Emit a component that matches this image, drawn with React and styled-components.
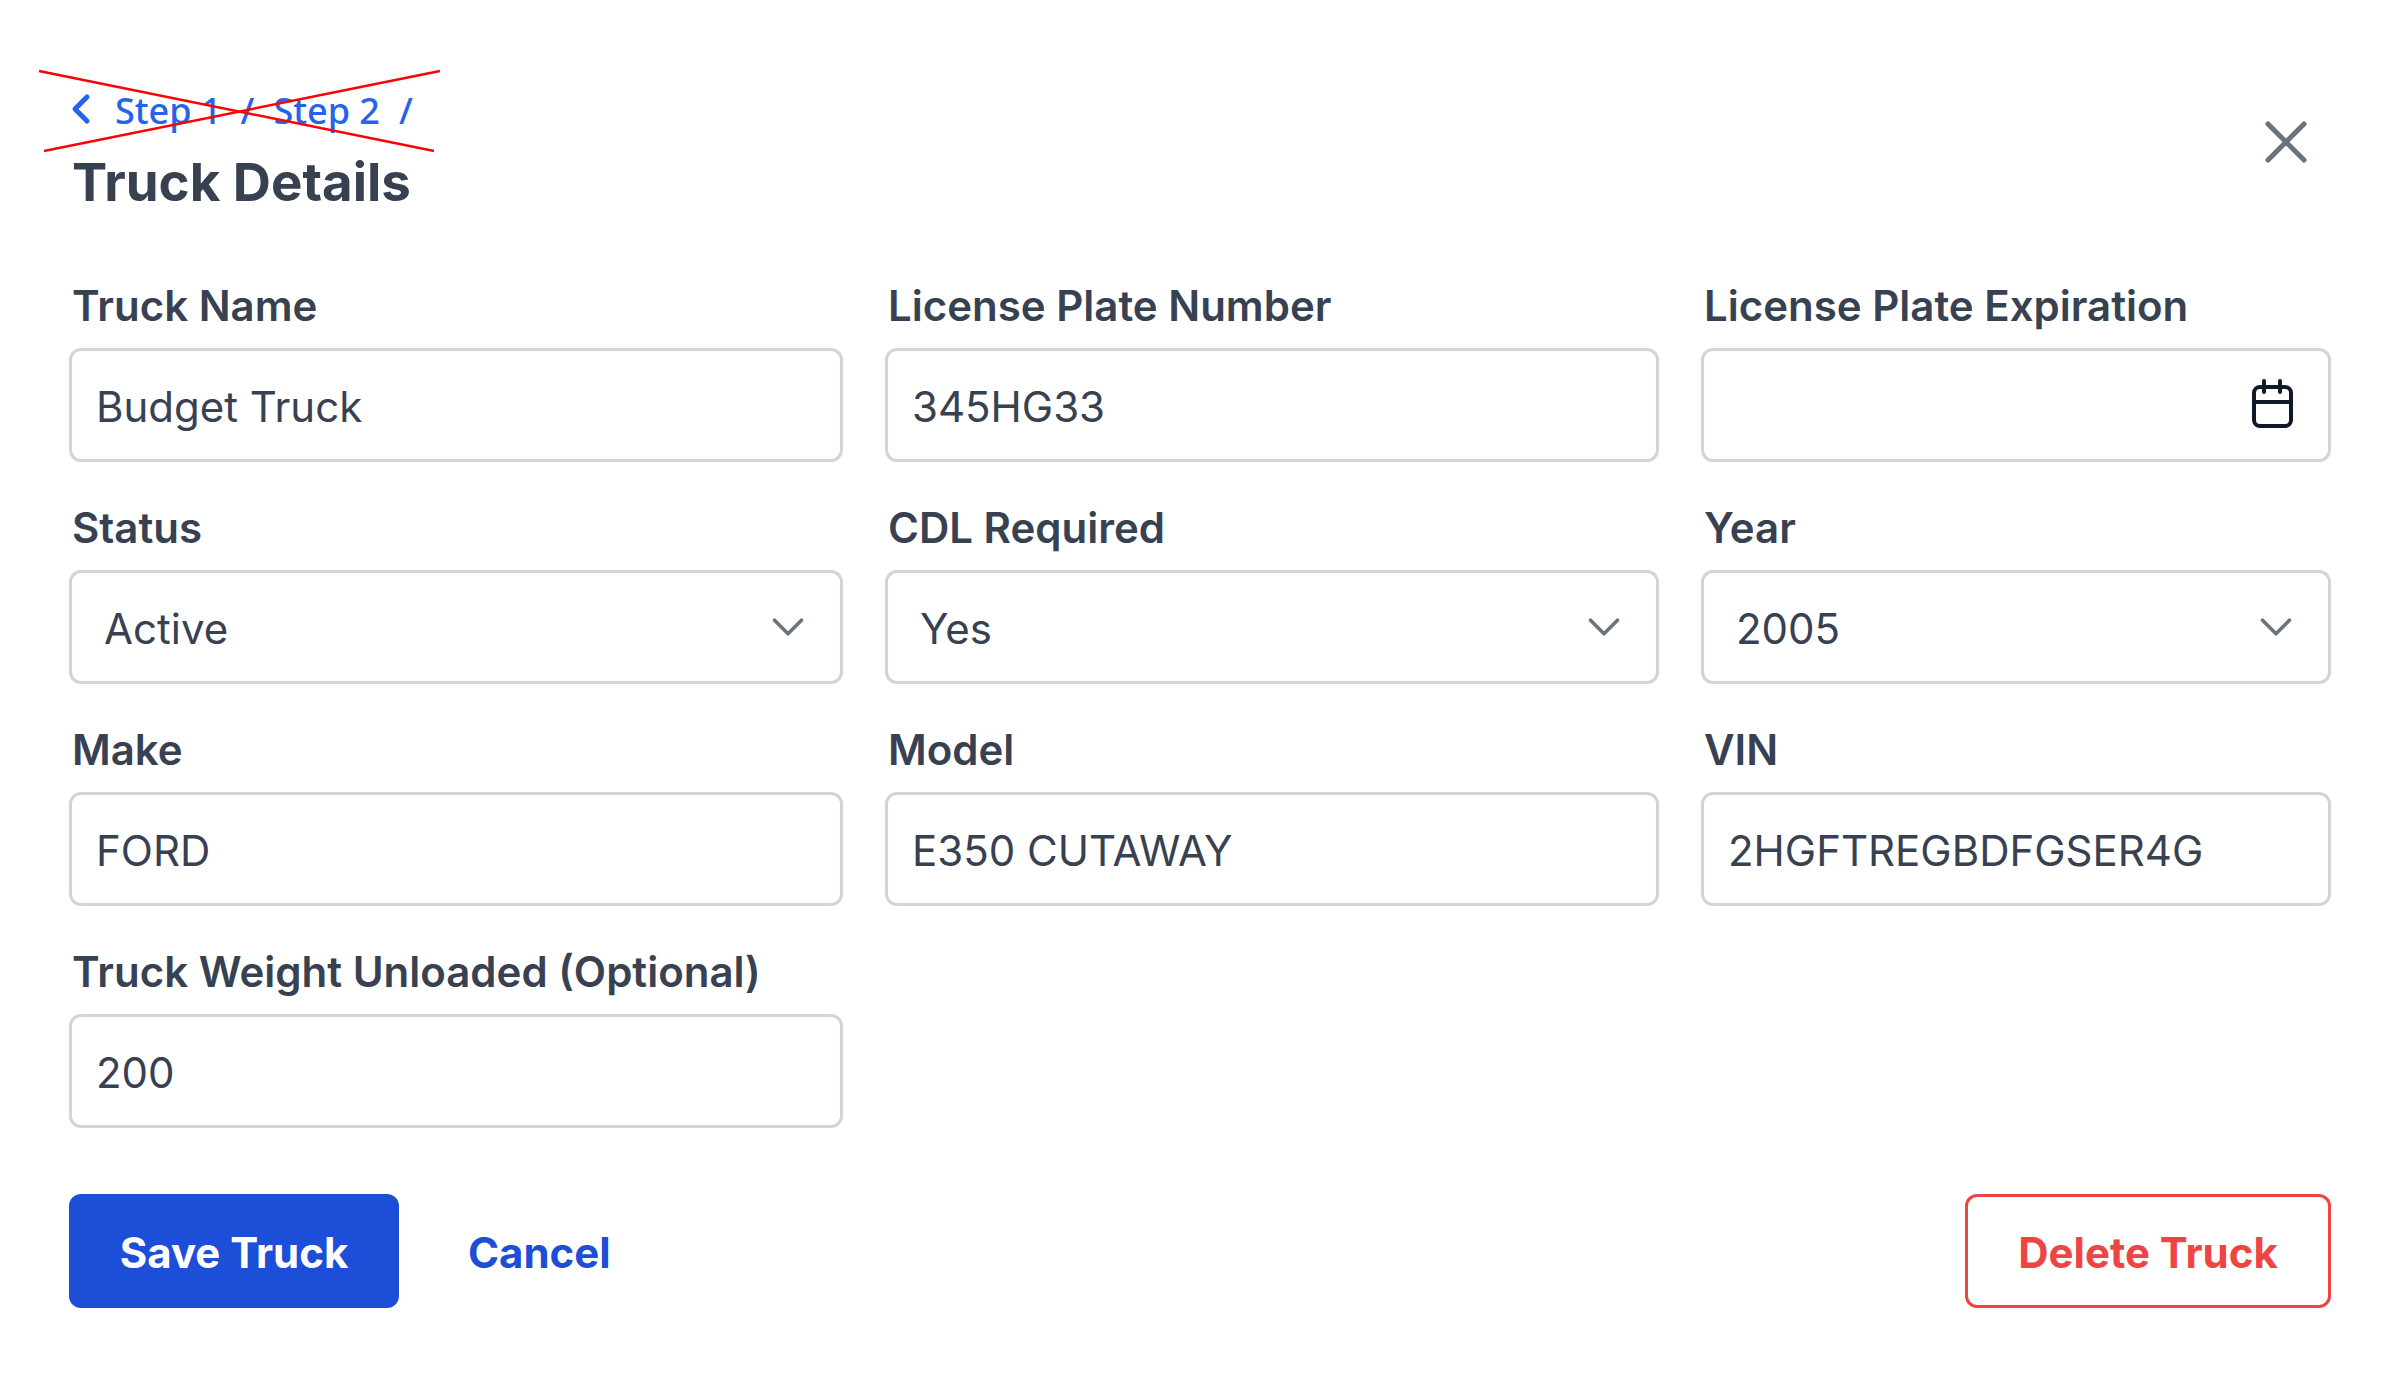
import React from 'react'
import styled, { createGlobalStyle } from 'styled-components'
import { ChevronDown, ChevronLeft, X } from 'lucide-react'

const GlobalStyle = createGlobalStyle`
  html, body { margin: 0; padding: 0; background: #fff; }
  body { font-family: Inter, "Liberation Sans", sans-serif; color: #374151; }
`

const Page = styled.div`
  width: 2400px;
  height: 1377px;
  box-sizing: border-box;
  padding: 90px 69px 0;
`

const Header = styled.div`
  display: flex;
  justify-content: space-between;
  align-items: flex-start;
  height: 192px;
`

const TitleBlock = styled.div`
  position: relative;
  padding-left: 3px;
`

const Crumbs = styled.div`
  display: flex;
  align-items: center;
  height: 40px;
  font-family: "Noto Sans", sans-serif;
  font-size: 36px;
  font-weight: 500;
  color: #2563eb;
  gap: 19px;
  svg {
    margin: -2px -9px 0 -15px;
  }
`

const Strike = styled.svg`
  position: absolute;
  left: -33px;
  top: -22px;
  width: 410px;
  height: 84px;
`

const Title = styled.h1`
  margin: 22px 0 0;
  font-size: 52.8px;
  line-height: 60px;
  font-weight: 700;
  color: #374151;
`

const CloseButton = styled.div`
  display: flex;
  margin: 16px 9px 0 0;
  color: #6b7280;
`

const Grid = styled.div`
  display: grid;
  grid-template-columns: 774px 774px 630px;
  column-gap: 42px;
  row-gap: 42px;
`

const Field = styled.div`
  display: flex;
  flex-direction: column;
`

const Label = styled.label`
  font-size: 42px;
  line-height: 48px;
  font-weight: 600;
  padding-left: 3px;
  margin-bottom: 18px;
  color: #374151;
`

const Box = styled.div`
  display: flex;
  align-items: center;
  justify-content: space-between;
  box-sizing: border-box;
  height: 114px;
  border: 3px solid #d1d5db;
  border-radius: 12px;
  padding: 0 ${p => p.$right}px 0 ${p => p.$left}px;
  font-size: 42px;
  color: #374151;
  span {
    padding-top: 2px;
  }
`

const CalendarIcon = styled.svg`
  width: 41px;
  height: 49px;
  margin-top: -3px;
  fill: none;
  stroke: #111827;
  stroke-width: 4;
  stroke-linecap: round;
`

const Footer = styled.div`
  display: flex;
  align-items: center;
  margin-top: 66px;
`

const SaveButton = styled.button`
  width: 330px;
  height: 114px;
  border: 0;
  border-radius: 12px;
  padding: 2px 0 0;
  background: #1d4ed8;
  color: #fff;
  font: 700 42px Inter, sans-serif;
`

const CancelButton = styled.button`
  margin-left: 69px;
  border: 0;
  padding: 2px 0 0;
  background: none;
  color: #1d4ed8;
  font: 700 42px Inter, sans-serif;
`

const DeleteButton = styled.button`
  margin-left: auto;
  width: 366px;
  height: 114px;
  border: 3px solid #ef4444;
  border-radius: 12px;
  padding: 2px 0 0;
  background: #fff;
  color: #ef4444;
  font: 700 42px Inter, sans-serif;
`

const fields = [
  { label: 'Truck Name', value: 'Budget Truck' },
  { label: 'License Plate Number', value: '345HG33' },
  { label: 'License Plate Expiration', value: '', date: true },
  { label: 'Status', value: 'Active', select: true },
  { label: 'CDL Required', value: 'Yes', select: true },
  { label: 'Year', value: '2005', select: true },
  { label: 'Make', value: 'FORD' },
  { label: 'Model', value: 'E350 CUTAWAY' },
  { label: 'VIN', value: '2HGFTREGBDFGSER4G' },
  { label: 'Truck Weight Unloaded (Optional)', value: '200' }
]

const FormField = ({ label, value, select, date }) => (
  <Field>
    <Label>{label}</Label>
    <Box $left={select ? 32 : 24} $right={select ? 25 : 35}>
      <span>{value}</span>
      {select && <ChevronDown size={54} strokeWidth={1.6} color="#6b7280" />}
      {date && (
        <CalendarIcon viewBox="0 0 41 49">
          <rect x="2" y="8" width="37" height="39" rx="6" />
          <path d="M2 23h37M12 2v11M28 2v11" />
        </CalendarIcon>
      )}
    </Box>
  </Field>
)

const App = () => (
  <Page>
    <GlobalStyle />
    <Header>
      <TitleBlock>
        <Crumbs>
          <ChevronLeft size={48} strokeWidth={2.5} />
          <span>Step 1</span>
          <span>/</span>
          <span>Step 2</span>
          <span>/</span>
        </Crumbs>
        <Strike viewBox="0 0 410 84">
          <line x1="3" y1="3" x2="398" y2="83" stroke="#ff0000" strokeWidth="2.5" />
          <line x1="404" y1="3" x2="8" y2="83" stroke="#ff0000" strokeWidth="2.5" />
        </Strike>
        <Title>Truck Details</Title>
      </TitleBlock>
      <CloseButton>
        <X size={72} strokeWidth={1.7} />
      </CloseButton>
    </Header>
    <Grid>
      {fields.map(f => (
        <FormField key={f.label} {...f} />
      ))}
    </Grid>
    <Footer>
      <SaveButton>Save Truck</SaveButton>
      <CancelButton>Cancel</CancelButton>
      <DeleteButton>Delete Truck</DeleteButton>
    </Footer>
  </Page>
)

export default App
